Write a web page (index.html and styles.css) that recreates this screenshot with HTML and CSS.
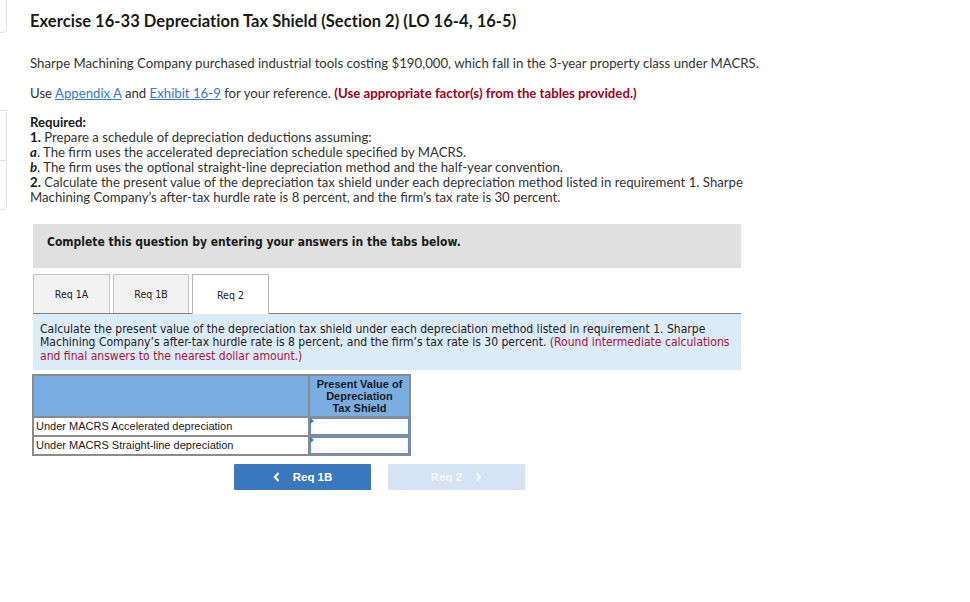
FILE: index.html
```html
<!DOCTYPE html>
<html>
<head>
<meta charset="utf-8">
<link rel="stylesheet" href="styles.css">
</head>
<body>
<div class="page">
  <div class="rail">
    <div class="rail-box rail-top"></div>
    <div class="rail-box rail-mid"></div>
    <div class="rail-box rail-low"></div>
  </div>
  <div class="main">
    <h1 class="title">Exercise 16-33 Depreciation Tax Shield (Section 2) (LO 16-4, 16-5)</h1>
    <p class="para p1">Sharpe Machining Company purchased industrial tools costing $190,000, which fall in the 3-year property class under MACRS.</p>
    <p class="para p2">Use <a class="link" href="#">Appendix A</a> and <a class="link" href="#">Exhibit 16-9</a> for your reference. <b class="red">(Use appropriate factor(s) from the tables provided.)</b></p>
    <div class="req">
      <div class="req-head">Required:</div>
      <div><b>1.</b> Prepare a schedule of depreciation deductions assuming:</div>
      <div><b><i>a</i></b>. The firm uses the accelerated depreciation schedule specified by MACRS.</div>
      <div><b><i>b</i></b>. The firm uses the optional straight-line depreciation method and the half-year convention.</div>
      <div><b>2.</b> Calculate the present value of the depreciation tax shield under each depreciation method listed in requirement 1. Sharpe Machining Company’s after-tax hurdle rate is 8 percent, and the firm’s tax rate is 30 percent.</div>
    </div>
    <div class="panel">
      <div class="complete">Complete this question by entering your answers in the tabs below.</div>
      <div class="tabs">
        <div class="tab">Req 1A</div>
        <div class="tab">Req 1B</div>
        <div class="tab active">Req 2</div>
      </div>
      <div class="info">Calculate the present value of the depreciation tax shield under each depreciation method listed in requirement 1. Sharpe Machining Company’s after-tax hurdle rate is 8 percent, and the firm’s tax rate is 30 percent. <span class="hint">(Round intermediate calculations and final answers to the nearest dollar amount.)</span></div>
      <table class="grid">
        <tr class="head">
          <th class="c1"></th>
          <th class="c2">Present Value of<br>Depreciation<br>Tax Shield</th>
        </tr>
        <tr>
          <td class="c1">Under MACRS Accelerated depreciation</td>
          <td class="c2 input"><span class="flag"></span></td>
        </tr>
        <tr>
          <td class="c1">Under MACRS Straight-line depreciation</td>
          <td class="c2 input"><span class="flag"></span></td>
        </tr>
      </table>
      <div class="nav">
        <div class="btn prev"><svg class="chev" width="7" height="10" viewBox="0 0 7 10"><path d="M5.5 1 L1.8 5 L5.5 9" fill="none" stroke="#fff" stroke-width="2"/></svg>Req 1B</div>
        <div class="btn next disabled">Req 2<svg class="chev" width="7" height="10" viewBox="0 0 7 10"><path d="M1.5 1 L5.2 5 L1.5 9" fill="none" stroke="#f4f8fc" stroke-width="2"/></svg></div>
      </div>
    </div>
  </div>
</div>
</body>
</html>
```
FILE: styles.css
```css
* { box-sizing: border-box; }
html, body { margin: 0; padding: 0; background: #fff; }
body { font-family: "Lato", "Open Sans", sans-serif; color: #1f1f1f; }
.page { display: flex; width: 970px; height: 602px; }
.rail { width: 30px; flex: none; display: flex; flex-direction: column; }
.rail-box { width: 7px; border: 1px solid #e3e3e3; border-left: none; }
.rail-top { height: 33px; border-top: none; border-bottom-right-radius: 4px; }
.rail-mid { height: 50px; margin-top: 77px; border-bottom: none; }
.rail-low { height: 50px; border-bottom-right-radius: 4px; }
.main { flex: none; width: 920px; }
.title { font-size: 16.5px; font-weight: 700; margin: 11px 0 0 0; line-height: 20px; color: #1a1a1a; letter-spacing: 0.05px; }
.para { font-size: 13.2px; margin: 0; line-height: 16px; color: #333; }
.p1 { margin-top: 24px; }
.p2 { margin-top: 14px; }
.link { color: #3a77c8; text-decoration: underline; }
.red { color: #a3001b; font-weight: 700; }
.req { margin-top: 14px; font-size: 13.2px; line-height: 15px; color: #333; width: 735px; }
.req b { color: #1a1a1a; }
.req-head { font-weight: 700; color: #1a1a1a; }
.panel { margin-top: 19px; margin-left: 3px; width: 708px; }
.complete { background: #e0e0e0; height: 44px; padding: 10px 0 0 14px; font-family: "DejaVu Sans Condensed", "DejaVu Sans", sans-serif; font-weight: 700; font-size: 12px; color: #1a1a1a; line-height: 16px; }
.tabs { display: flex; gap: 3px; margin-top: 6px; border-bottom: 1px solid #7f7f7f; height: 40px; }
.tab { width: 77px; height: 39px; background: #f2f2f2; border: 1px solid #c6c6c6; border-bottom: none; font-family: "DejaVu Sans Condensed", "DejaVu Sans", sans-serif; font-size: 10.5px; color: #222; display: flex; align-items: center; justify-content: center; }
.tab:nth-child(2) { width: 76px; }
.tab.active { background: #fff; border-color: #b5b5b5; height: 40px; margin-bottom: -1px; }
.info { background: #dcebf8; padding: 9px 7px 7px 7px; font-family: "DejaVu Sans Condensed", "DejaVu Sans", sans-serif; font-size: 12.05px; line-height: 13.3px; color: #222; }
.hint { color: #a8123e; }
.grid { margin-top: 4px; margin-left: -1px; border-collapse: collapse; font-family: "Liberation Sans", Arial, sans-serif; font-size: 11px; }
.grid td, .grid th { border: 2px solid #8b8b8b; padding: 0; }
.grid .head th { background: #7aaee3; height: 42px; font-weight: 700; color: #1a1a1a; line-height: 12px; padding: 0 2px; vertical-align: middle; }
.grid th.c2 { width: 101px; text-align: center; }
.grid td.c1 { width: 276px; height: 19px; padding-left: 2px; color: #1a1a1a; }
.grid td.input { background: #fff; position: relative; border-color: #8b8b8b; box-shadow: inset 0 0 0 1px #5b8fd0; }
.flag { position: absolute; left: 0; top: 0; width: 0; height: 0; border-top: 3px solid transparent; border-bottom: 3px solid transparent; border-left: 4px solid #3a77c8; }
.nav { display: flex; gap: 17px; margin-top: 8px; margin-left: 201px; }
.btn { width: 137px; height: 26px; border-radius: 1px; display: flex; align-items: center; justify-content: center; font-family: "Liberation Sans", Arial, sans-serif; font-weight: 700; font-size: 11.5px; color: #fff; }
.btn.prev { background: #3a77bd; }
.btn.disabled { background: #d6e3f2; color: #f4f8fc; }
.chev { display: block; }
.prev .chev { margin-right: 13px; }
.next .chev { margin-left: 13px; }
```
